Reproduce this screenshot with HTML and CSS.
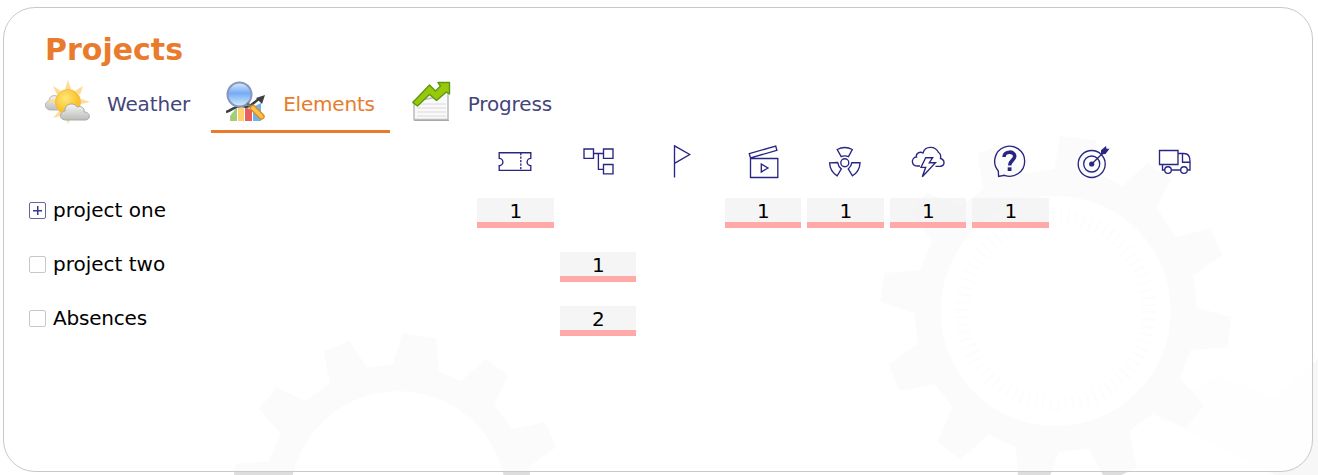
FILE: index.html
```html
<!DOCTYPE html>
<html lang="en">
<head>
<meta charset="utf-8">
<title>Projects</title>
<link rel="stylesheet" href="styles.css">
</head>
<body>
<svg class="backdrop" viewBox="0 0 1318 475" aria-hidden="true">
  <path class="facet" d="M1217 375L1273 397L1318 359V475H1275L1193 435L1150 415Z"/>
  <g transform="translate(860 120) scale(.33333)">
    <path class="gear" fill-rule="evenodd" d="M583 148L600 48L708 60L712 160L788 197L863 128L933 180L890 262L947 350L1052 325L1086 406L1000 468L1010 562L1113 592L1103 681L992 691L960 774L1032 856L978 924L878 881L808 934L831 1043L740 1085L685 985L596 996L560 1095L475 1085L467 980L385 945L301 1019L233 965L277 862L224 792L118 814L86 735L173 670L163 580L61 546L73 459L180 451L216 364L150 280L200 217L300 262L370 206L352 102L430 68L490 160ZM242 573a345 345 0 1 0 690 0a345 345 0 1 0-690 0Z"/>
    <path class="facet" d="M340 560L410 540L550 740L740 715L805 485L925 490A345 345 0 0 1 250 620Z" opacity=".3"/>
    <circle class="ticks" cx="587" cy="573" r="280" pathLength="780"/>
  </g>
  <g transform="translate(200 310) scale(.33333)">
    <path class="gear" fill-rule="evenodd" d="M102 495L107 462L206 454L242 372L177 297L228 232L316 273L389 220L371 123L447 93L503 173L579 163L607 70L709 84L716 183L784 213L857 146L924 194L883 287L937 357L1035 336L1069 411L987 470L990 495H911A325 325 0 0 0 278 495Z"/>
  </g>
</svg>
<main class="card">
  <h1 class="title">Projects</h1>
  <nav class="tabs">
    <a class="tab">
      <svg class="tab-icon wide" viewBox="0 0 48 48">
        <defs>
          <radialGradient id="sun" cx=".4" cy=".35"><stop offset="0" stop-color="#ffe878"/><stop offset="1" stop-color="#fbc22e"/></radialGradient>
          <linearGradient id="cloud" x2="0" y2="1"><stop offset="0" stop-color="#f5f5f4"/><stop offset="1" stop-color="#bcbcbb"/></linearGradient>
        </defs>
        <path d="M5 32c-6-1-6-8-1-9c0-7 9-7 12-1l-2 10z" fill="url(#cloud)" stroke="#b4b4b2"/>
        <path fill="#ffdc96" d="M23 2l3 9h-6zM8 8l8 5-4 4zM38 8l-3 9-5-4zM45 24l-9-3v5zM23 46l3-8h-6zM8 40l7-8 4 5zM1 23l9-2v4z"/>
        <circle cx="23" cy="24" r="12.5" fill="url(#sun)" stroke="#f4ba46"/>
        <path d="M20 42c-7-1-5-9 0-9c-1-8 10-9 12-4c5-2 8 2 7 5c7 0 7 8 1 8z" fill="url(#cloud)" stroke="#a9a9a7"/>
      </svg>
      <span>Weather</span>
    </a>
    <a class="tab active">
      <svg class="tab-icon" viewBox="0 0 42 42">
        <defs><linearGradient id="lens" x2="0" y2="1"><stop offset="0" stop-color="#d9e9fc"/><stop offset=".45" stop-color="#76abf3"/><stop offset="1" stop-color="#d7f0ff"/></linearGradient></defs>
        <path fill="#a4cd7a" d="M4 40v-5l7-9v14z"/><path fill="#ffd16e" d="M12 40V26h6v14z"/><path fill="#e6605e" d="M19 40V26l7 3v11z"/><path fill="#6fb2e3" d="M27 40V26l8-4v18z"/>
        <path d="M0 31c7-2 9-7 17-6c6 3 10-3 16-7" fill="none" stroke="#3c4044" stroke-width="2.400"/>
        <path fill="#3c4044" d="M30 17l9-3-3 9z"/>
        <circle cx="13.500" cy="13.500" r="12" fill="url(#lens)" stroke="#8995bb" stroke-width="2"/>
        <path d="M21 22l6 6" stroke="#777" stroke-width="3"/>
        <path d="M27 27l8.500 8.500" stroke="#d88d23" stroke-width="6.400" stroke-linecap="round"/><path d="M27 27l8.500 8.500" stroke="#ffc14c" stroke-width="3.600" stroke-linecap="round"/>
      </svg>
      <span>Elements</span>
    </a>
    <a class="tab">
      <svg class="tab-icon" viewBox="0 0 42 42">
        <path d="M2 20V38.500H36V4L20 17z" fill="#f9f9f9" stroke="#bbb" stroke-width="1.500"/>
        <path d="M5 23h29M5 27h29M5 31h29M5 35h29" stroke="#dadada"/>
        <path d="M2 39.500h35" stroke="#aaa"/>
        <path d="M.8 21.500L17.500 4l6 6 5-5-2.500-3.500h11.500V13l-3-2-10 8.500-7-6L5.500 25z" fill="#98c70b" stroke="#5c9911" stroke-width="1.400" stroke-linejoin="round"/>
      </svg>
      <span>Progress</span>
    </a>
  </nav>
  <section class="grid">
    <div class="row head">
      <span></span>
      <svg class="icon" viewBox="0 0 34 34"><path d="M1.200 7.700H32.800V13.300a3.700 3.700 0 0 0 0 7.400V25.300H1.200V20.700a3.700 3.700 0 0 0 0-7.400Z"/><path d="M22.800 8v17" stroke-dasharray="2.200 1.300"/></svg>
      <svg class="icon" viewBox="0 0 34 34"><path d="M3 4h9.500v9.300H3zM22.500 4H32v9.300h-9.500zM22.500 19.500H32v9.300h-9.500zM12.500 8.500h10M17.400 8.500v15.800h5"/></svg>
      <svg class="icon" viewBox="0 0 34 34"><path d="M11.500 32.500V.8L26.700 9.500 11.500 18.300"/></svg>
      <svg class="icon" viewBox="0 0 34 34"><path d="M4.500 13.500h27.300v19H4.500zM3.300 8.700L29.700 1l1.200 4.300L4.500 13zM15.300 19l6.700 4-6.700 4z"/></svg>
      <svg class="icon" viewBox="0 0 34 34"><circle cx="16.800" cy="17.700" r="4"/><path id="blade" d="M9.200 4.500Q16.800.500 24.300 4.500L20.500 11.600Q16.800 10.200 13.200 11.600Z"/><use href="#blade" transform="rotate(120 16.800 17.700)"/><use href="#blade" transform="rotate(240 16.800 17.700)"/></svg>
      <svg class="icon" viewBox="0 0 34 34"><path d="M9 21H7C-.5 21 0 12.500 5.500 12C4.500 8.500 9 6 12 8C14 .5 24.500.500 27.500 7.500C29.500 8.500 30 11 29.500 13.500C34.500 15 34 21 29 21.300H24.500M14.700 12.700h7l-3.400 5h6.200L11.300 31.700l3.400-9.400H10z"/></svg>
      <svg class="icon" viewBox="0 0 34 34"><path d="M5.300 26A15 15 0 1 1 11.500 30.300L5.600 31.400Z"/><path class="thick" d="M11 12C11 5.500 22 5.800 21.700 11.500C21.500 15 16.700 15.500 16.700 20.500"/><path class="solid" d="M14.700 22.300h3.800v3.700h-3.800z"/></svg>
      <svg class="icon" viewBox="0 0 34 34"><circle cx="15.700" cy="19" r="13.500"/><circle cx="15.700" cy="19" r="8"/><circle class="solid" cx="15.700" cy="19" r="2.600"/><path d="M15.700 19L27 8"/><path class="solid" d="M25 9.500V5.300L30 1l.5 2.800H33.500l-4 5.200z"/></svg>
      <svg class="icon" viewBox="0 0 34 34"><path d="M1.500 5.500H20v14H1.500zM20 8.500h6c4 0 6 3 6 7.500v9h-2.700M22.700 25h-9.400M6.700 25H4.500v-5.500M4.500 19.500H20V8.500M24.500 8.700v8.500H32"/><circle cx="10" cy="25" r="3.300"/><circle cx="26" cy="25" r="3.300"/></svg>
    </div>
    <div class="row">
      <div class="name"><span class="box expand"></span>project one</div>
      <b class="count">1</b><i></i><i></i><b class="count">1</b><b class="count">1</b><b class="count">1</b><b class="count">1</b><i></i><i></i>
    </div>
    <div class="row">
      <div class="name"><span class="box"></span>project two</div>
      <i></i><b class="count">1</b>
    </div>
    <div class="row">
      <div class="name"><span class="box"></span><span class="tight">Absences</span></div>
      <i></i><b class="count">2</b>
    </div>
  </section>
</main>
</body>
</html>
```
FILE: styles.css
```css
* { box-sizing: border-box; }
body {
  margin: 0;
  height: 475px;
  padding: 7px 5px 3px 3px;
  overflow: hidden;
  background: #fff;
  font: 20px/24px Verdana, "DejaVu Sans", sans-serif;
  color: #000;
}
.backdrop { position: absolute; left: 0; top: 0; width: 1318px; height: 475px; z-index: -1; }
.gear { fill: #ddd; }
.facet { fill: #f7f7f7; }
.ticks { fill: none; stroke: #e6e6e6; stroke-width: 44; stroke-dasharray: 2.500 7.500; }
.card {
  height: 465px;
  padding: 25px 26px 0 25px;
  border: 1px solid #c8c8c8;
  border-radius: 32px;
  background: rgba(255, 255, 255, .88);
}
.title { margin: 0 0 0 16px; font-size: 30px; line-height: 34px; color: #e97b2c; }
.tabs { display: flex; gap: 6px; height: 66px; }
.tab {
  display: flex;
  align-items: center;
  gap: 14px;
  padding: 11px 15px 0 16px;
  border-bottom: 3px solid transparent;
  letter-spacing: -.15px;
  color: #454578;
}
.tab.active { padding-left: 15px; letter-spacing: -.2px; border-color: #e97b2c; color: #e97b2c; }
.active .tab-icon { margin-right: 1px; }
.tab-icon { width: 42px; height: 42px; margin-bottom: 4px; }
.wide { width: 48px; height: 48px; }
.row {
  display: grid;
  grid-template-columns: 442px repeat(9, 76.5px);
  column-gap: 6px;
  height: 54px;
  align-items: start;
}
.head { height: 65px; padding-top: 12px; }
.icon {
  justify-self: center;
  width: 34px;
  height: 34px;
  fill: none;
  stroke: #292683;
  stroke-width: 1.350;
}
.icon .thick { stroke-width: 3.600; }
.icon .solid { fill: #292683; stroke: none; }
.name { display: flex; align-items: center; gap: 7px; height: 24px; }
.box { width: 17px; height: 17px; border: 1px solid #c8c8c8; border-radius: 2px; margin-top: 1px; }
.tight { letter-spacing: -.2px; }
.expand {
  border-color: #67669f;
  background:
    linear-gradient(#3c3a8b, #3c3a8b) center / 9px 1.500px no-repeat,
    linear-gradient(#3c3a8b, #3c3a8b) center / 1.500px 9px no-repeat;
}
.count {
  height: 30px;
  line-height: 26px;
  padding-left: 1px;
  border-bottom: 6px solid #ffa9a9;
  background: rgba(240, 240, 240, .65);
  font-weight: 400;
  text-align: center;
}
```
